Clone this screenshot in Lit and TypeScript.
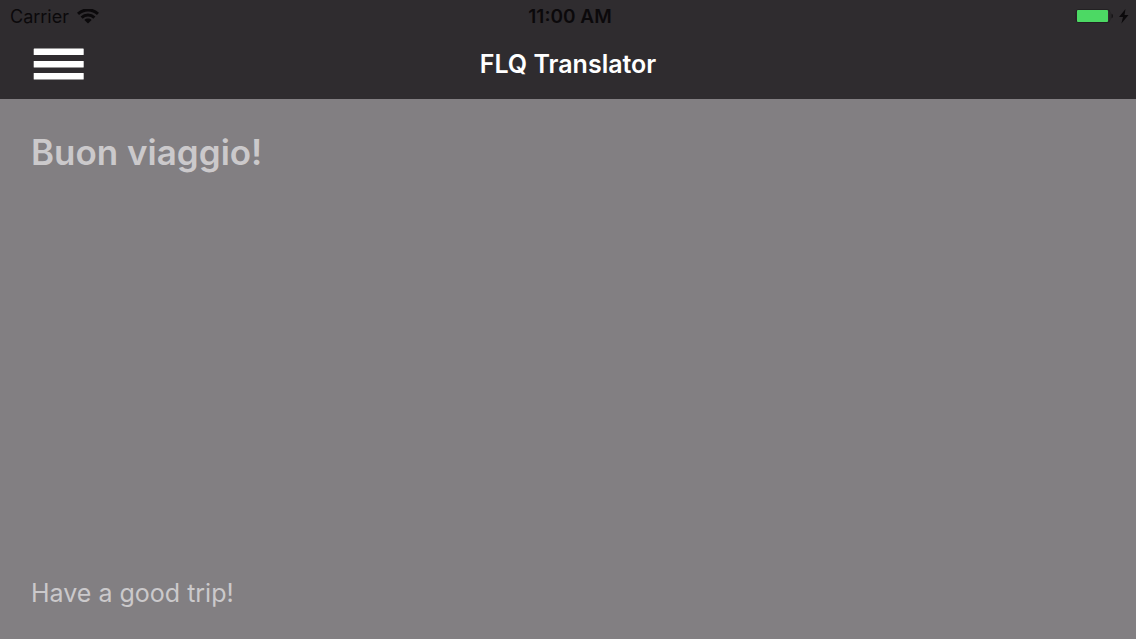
import { LitElement, html, css } from "lit";
import { customElement, property } from "lit/decorators.js";

@customElement("status-bar")
class StatusBar extends LitElement {
  @property() carrier = "Carrier";
  @property() time = "11:00 AM";

  static styles = css`
    :host {
      display: grid;
      grid-template-columns: 1fr auto 1fr;
      align-items: center;
      height: 32px;
      padding: 1px 6px 0 10px;
      color: #0b090b;
      font-size: 18px;
      line-height: 24px;
    }
    .network { display: flex; align-items: center; gap: 8px; }
    .time { font-weight: 600; font-size: 19px; }
    .power { display: flex; align-items: center; justify-content: flex-end; gap: 4px; }
    svg { display: block; }
  `;

  render() {
    return html`
      <div class="network">
        <span>${this.carrier}</span>
        <svg width="22" height="16" viewBox="0 0 22 16" role="img" aria-label="Wi-Fi">
          <g fill="none" stroke="#0b090b" stroke-width="3">
            <path d="M1 4.8C6.6-.4 15.4-.4 21 4.8" />
            <path d="M4.6 8.6c3.6-3.4 9.2-3.4 12.8 0" />
          </g>
          <path d="M7.4 10.9c2-1.9 5.2-1.9 7.2 0L11 14.6z" fill="#0b090b" />
        </svg>
      </div>
      <span class="time">${this.time}</span>
      <div class="power">
        <svg width="40" height="16" viewBox="0 0 40 16" role="img" aria-label="Battery full">
          <rect x="1" y=".5" width="34" height="13" rx="3" fill="none" stroke="#232123" />
          <rect x="2" y="1" width="31" height="12" rx="1" fill="#4cd964" />
          <path d="M36.5 4.5c2 1 2 4 0 5z" fill="#151315" />
        </svg>
        <svg width="11" height="16" viewBox="0 0 11 16" role="img" aria-label="Charging">
          <path d="M6.5 0 0 8h4L2.4 14.5 9.5 6H5.5z" fill="#0b090b" />
        </svg>
      </div>
    `;
  }
}

@customElement("app-root")
class AppRoot extends LitElement {
  static styles = css`
    :host {
      display: flex;
      flex-direction: column;
      min-height: 100vh;
      background: #827f82;
      font-family: Inter, "Liberation Sans", sans-serif;
    }
    header { background: #2f2c2f; }
    nav {
      display: grid;
      grid-template-columns: 1fr auto 1fr;
      align-items: center;
      height: 62px;
      padding: 0 32px 4px;
    }
    .menu {
      justify-self: start;
      padding: 0;
      border: 0;
      background: none;
      cursor: pointer;
    }
    .menu svg { display: block; }
    h1 {
      margin: 0;
      color: #fff;
      font-size: 25px;
      line-height: 32px;
      font-weight: 600;
    }
    main {
      flex: 1;
      display: flex;
      flex-direction: column;
      justify-content: space-between;
      padding: 31px 31px 32px;
      color: #cbc9cb;
    }
    p { margin: 0; }
    .phrase { font-size: 35px; line-height: 44px; font-weight: 600; }
    .translation { font-size: 25px; line-height: 28px; }
  `;

  render() {
    return html`
      <header>
        <status-bar></status-bar>
        <nav>
          <button class="menu" aria-label="Menu">
            <svg width="53" height="34" viewBox="0 0 53 34" fill="#fff">
              <rect x="1.7" y="1.5" width="50" height="6.5" rx=".6" />
              <rect x="1.7" y="14" width="50" height="6.5" rx=".6" />
              <rect x="1.7" y="26" width="50" height="6.5" rx=".6" />
            </svg>
          </button>
          <h1>FLQ Translator</h1>
        </nav>
      </header>
      <main>
        <p class="phrase" lang="it">Buon viaggio!</p>
        <p class="translation">Have a good trip!</p>
      </main>
    `;
  }
}
